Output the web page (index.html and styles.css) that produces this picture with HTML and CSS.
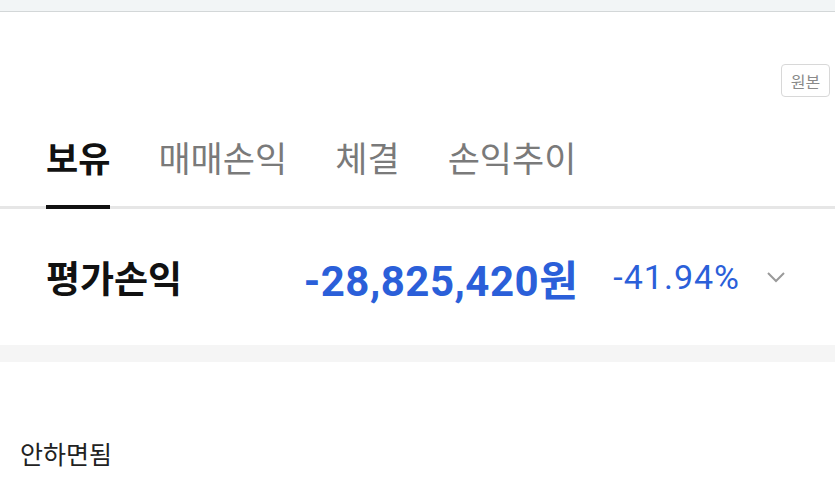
FILE: index.html
```html
<!DOCTYPE html>
<html lang="ko">
<head>
    <meta charset="UTF-8">
    <meta name="viewport" content="width=device-width, initial-scale=1.0">
    <title>잔고</title>
    <link rel="stylesheet" href="styles.css">
</head>
<body>

    <div class="topbar"></div>

    <div class="toolbar">
        <button class="btn-original">원본</button>
    </div>

    <nav class="tabs">
        <div class="tab active">보유</div>
        <div class="tab">매매손익</div>
        <div class="tab">체결</div>
        <div class="tab">손익추이</div>
    </nav>

    <div class="summary">
        <div class="summary-label">평가손익</div>
        <div class="summary-amount">-28,825,420<span class="won">원</span></div>
        <div class="summary-rate">-41.94%</div>
        <svg class="chevron" width="20" height="12" viewBox="0 0 20 12">
            <polyline points="2,2 10,10 18,2" fill="none" stroke="#9a9a9a" stroke-width="2"/>
        </svg>
    </div>

    <div class="divider"></div>

    <p class="comment">안하면됨</p>

</body>
</html>
```

FILE: styles.css
```css
body {
    margin: 0;
    padding: 0;
    background-color: #fff;
    font-family: "Noto Sans CJK KR", "Noto Sans", sans-serif;
    color: #111;
}

.topbar {
    height: 11px;
    background-color: #f2f5f6;
    border-bottom: 1px solid #d3d7d8;
}

.toolbar {
    display: flex;
    justify-content: flex-end;
    padding: 52px 5px 0 0;
}

.btn-original {
    height: 33px;
    width: 49px;
    padding: 0;
    font-family: "Noto Sans CJK KR", sans-serif;
    font-size: 16px;
    color: #8a8a8a;
    background-color: #fff;
    border: 1px solid #d8d8d8;
    border-radius: 4px;
}

.tabs {
    display: flex;
    gap: 48px;
    padding: 42px 0 0 46px;
    border-bottom: 3px solid #e6e6e6;
}

.tab {
    font-size: 35px;
    line-height: 35px;
    color: #7a7a7a;
    padding-bottom: 31px;
}

.tab.active {
    color: #111;
    font-weight: bold;
    border-bottom: 4px solid #111;
    margin-bottom: -3px;
}

.summary {
    display: flex;
    align-items: center;
    height: 136px;
    padding: 0 49px 0 46px;
}

.summary-label {
    flex: 1;
    font-size: 37px;
    font-weight: bold;
    color: #111;
}

.summary-amount {
    font-family: Roboto, "Noto Sans CJK KR", sans-serif;
    font-size: 42px;
    font-weight: bold;
    color: #2b5fd9;
    letter-spacing: 0.5px;
}

.won {
    font-family: "Noto Sans CJK KR", sans-serif;
}

.summary-rate {
    font-family: Roboto, sans-serif;
    font-size: 34px;
    color: #2b5fd9;
    letter-spacing: 1px;
    margin-left: 35px;
}

.chevron {
    margin-left: 26px;
}

.divider {
    height: 17px;
    background-color: #f5f5f5;
}

.comment {
    margin: 0;
    padding: 73px 0 0 20px;
    font-size: 25px;
    line-height: 36px;
    color: #222;
}
```
